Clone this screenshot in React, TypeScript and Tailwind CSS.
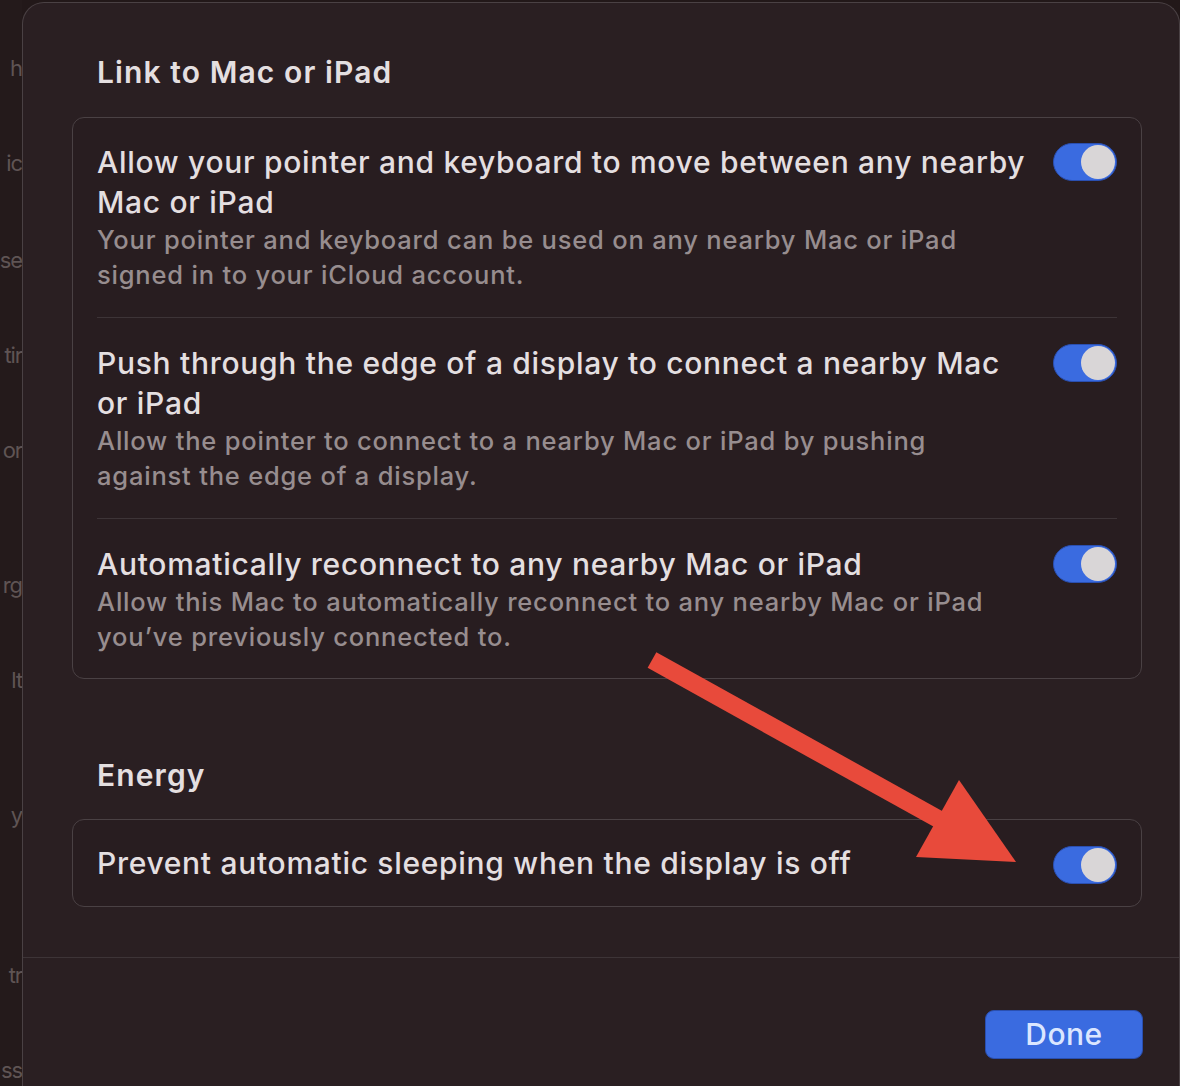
import React from 'react';

const BACK_WORDS = [
  { t: 'h', cls: 'mt-[48px]' },
  { t: 'ic', cls: 'mt-[55px]' },
  { t: 'se', cls: 'mt-[57px]' },
  { t: 'tir', cls: 'mt-[55px]' },
  { t: 'or', cls: 'mt-[55px]' },
  { t: 'rg', cls: 'mt-[95px]' },
  { t: 'lt', cls: 'mt-[55px]' },
  { t: 'y', cls: 'mt-[95px]' },
  { t: 'tr', cls: 'mt-[120px]' },
  { t: 'ss', cls: 'mt-[55px]' },
];

const ROWS = [
  {
    title: 'Allow your pointer and keyboard to move between any nearby Mac or iPad',
    desc: 'Your pointer and keyboard can be used on any nearby Mac or iPad signed in to your iCloud account.',
    cls: 'pt-[24px] pb-[25px]',
  },
  {
    title: 'Push through the edge of a display to connect a nearby Mac or iPad',
    desc: 'Allow the pointer to connect to a nearby Mac or iPad by pushing against the edge of a display.',
    cls: 'pt-[25px] pb-[25px] border-t border-[#3d3437]',
  },
  {
    title: 'Automatically reconnect to any nearby Mac or iPad',
    desc: 'Allow this Mac to automatically reconnect to any nearby Mac or iPad you\u2019ve previously connected to.',
    cls: 'pt-[25px] pb-[24px] border-t border-[#3d3437]',
  },
];

const Toggle: React.FC = () => (
  <div className="w-[64px] h-[38px] shrink-0 rounded-full bg-[#3a6be0] border border-[#2a4fb0] flex items-center justify-end pr-[1px]">
    <div className="w-[34px] h-[34px] rounded-full bg-[#d9d6d7]" />
  </div>
);

const App: React.FC = () => {
  return (
    <div
      className="relative w-[1180px] h-[1086px] overflow-hidden flex bg-[#221819]"
      style={{ fontFamily: 'Inter, "Noto Sans", sans-serif' }}
    >
      {/* window behind the sheet */}
      <div className="w-[22px] shrink-0 flex flex-col items-end overflow-hidden bg-[#241a1b]">
        {BACK_WORDS.map((w, i) => (
          <div key={i} className={`${w.cls} h-[40px] leading-[40px] text-[22px] tracking-tighter text-[#5f5454] whitespace-nowrap`}>
            {w.t}
          </div>
        ))}
      </div>

      {/* sheet */}
      <div className="flex-1 mt-[2px] rounded-t-[22px] border-l border-t border-r border-[#4a4144] bg-[#2a1f22] flex flex-col">
        <div className="pl-[49px] pr-[37px] pt-[49px]">
          <h2 className="pl-[25px] text-[30px] leading-[40px] font-semibold tracking-[1.1px] text-[#e4dfe0]">Link to Mac or iPad</h2>

          <div className="mt-[25px] rounded-[12px] border border-[#4a4144] bg-[#281d20] px-[24px]">
            {ROWS.map((r, i) => (
              <div key={i} className={`flex gap-[24px] ${r.cls}`}>
                <div className="flex-1">
                  <div className="text-[30px] leading-[40px] font-medium tracking-[0.7px] text-[#e4dfe0]">{r.title}</div>
                  <div className="max-w-[915px] text-[25.5px] leading-[35px] font-medium tracking-[0.8px] text-[#978d8f]">{r.desc}</div>
                </div>
                <div className="pt-[1px]">
                  <Toggle />
                </div>
              </div>
            ))}
          </div>

          <h2 className="mt-[76px] pl-[25px] text-[30px] leading-[40px] font-semibold tracking-[1.1px] text-[#e4dfe0]">Energy</h2>

          <div className="mt-[24px] h-[88px] rounded-[12px] border border-[#4a4144] bg-[#281d20] px-[24px] flex items-center justify-between">
            <div className="text-[30px] leading-[40px] font-medium tracking-[0.7px] text-[#e4dfe0]">
              Prevent automatic sleeping when the display is off
            </div>
            <div className="mt-[3px]">
              <Toggle />
            </div>
          </div>
        </div>

        <div className="mt-[50px] border-t border-[#3d3437] flex justify-end pr-[36px] pt-[52px]">
          <button className="w-[158px] h-[49px] rounded-[9px] bg-[#3a6be0] border border-[#2a4fb0] text-[30px] font-medium tracking-[0.5px] text-[#dbe6ff]">
            Done
          </button>
        </div>
      </div>

      {/* annotation arrow */}
      <svg className="absolute left-0 top-0 pointer-events-none" width="1180" height="1086" viewBox="0 0 1180 1086">
        <line x1="652" y1="660" x2="940" y2="820" stroke="#e84a3b" strokeWidth="18" />
        <polygon points="959,780 916,857 1016,862" fill="#e84a3b" />
      </svg>
    </div>
  );
};

export default App;
